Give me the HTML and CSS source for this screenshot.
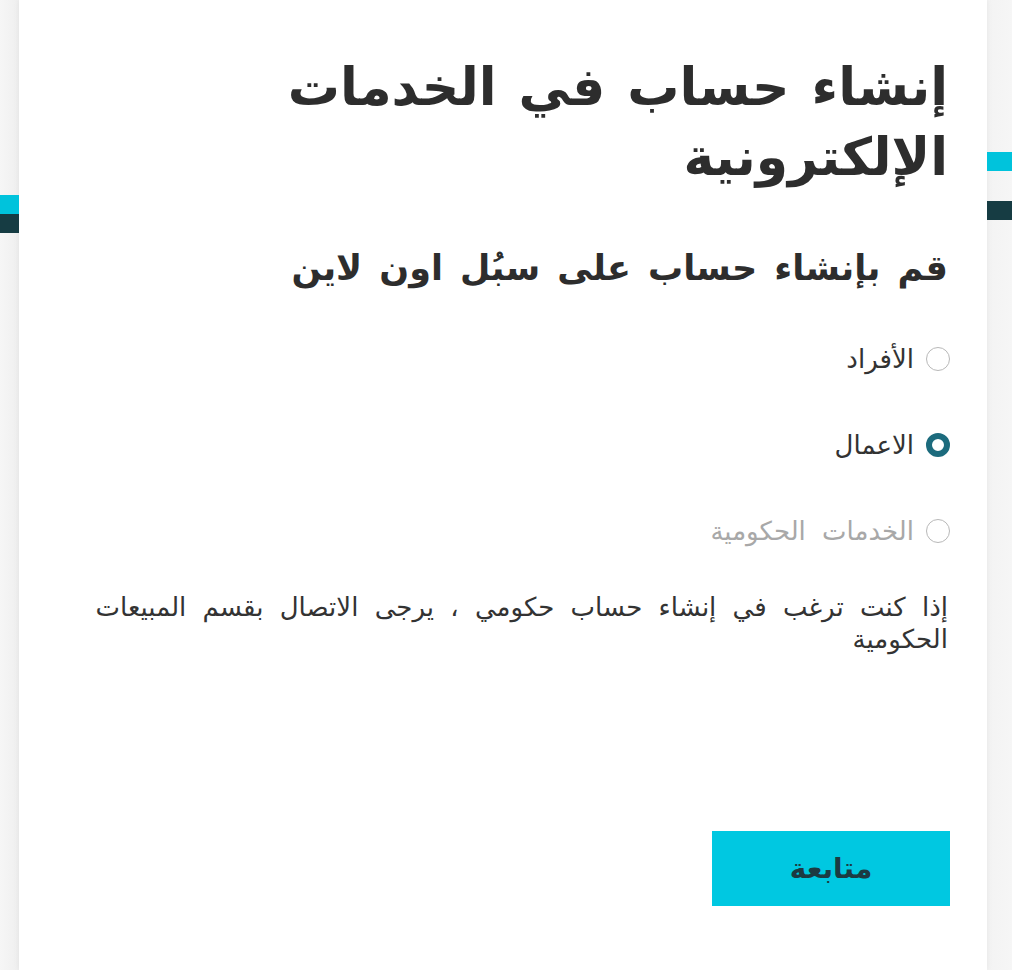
FILE: index.html
```html
<!DOCTYPE html>
<html lang="ar" dir="rtl">
<head>
<meta charset="utf-8">
<title>إنشاء حساب</title>
<link rel="stylesheet" href="styles.css">
</head>
<body>
<div class="deco deco-left"><span class="bar cyan"></span><span class="bar dark"></span></div>
<div class="deco deco-right"><span class="bar cyan"></span><span class="gap"></span><span class="bar dark"></span></div>
<main class="card">
  <h1 class="title">إنشاء حساب في الخدمات الإلكترونية</h1>
  <h2 class="subtitle">قم بإنشاء حساب على سبُل اون لاين</h2>
  <div class="options">
    <label class="option"><span class="radio"></span><span class="label">الأفراد</span></label>
    <label class="option"><span class="radio checked"></span><span class="label">الاعمال</span></label>
    <label class="option disabled"><span class="radio"></span><span class="label">الخدمات الحكومية</span></label>
  </div>
  <p class="note">إذا كنت ترغب في إنشاء حساب حكومي ، يرجى الاتصال بقسم المبيعات الحكومية</p>
  <div class="actions"><button class="btn">متابعة</button></div>
</main>
</body>
</html>
```
FILE: styles.css
```css
html, body {
  margin: 0;
  padding: 0;
  height: 100%;
}
body {
  background: linear-gradient(to right, #f6f6f6 0, #efefef 19px, #f3f3f3 987px, #f6f6f6 100%);
  font-family: "DejaVu Sans", "Noto Sans", sans-serif;
  color: #2e2e2e;
  overflow: hidden;
  direction: rtl;
}
.card {
  margin-right: 25px;
  width: 968px;
  min-height: 970px;
  box-sizing: border-box;
  background: #fff;
  padding: 52px 39px 0 60px;
  box-shadow: 0 0 6px rgba(0,0,0,0.06);
}
.deco {
  position: absolute;
  display: flex;
  flex-direction: column;
}
.deco-left { left: 0; top: 195px; width: 19px; }
.deco-right { right: 0; top: 152px; width: 25px; }
.bar { display: block; height: 19px; }
.gap { display: block; height: 30px; }
.cyan { background: #00c3dc; }
.dark { background: #163c43; }
.title {
  margin: 0;
  font-size: 52px;
  line-height: 70px;
  font-weight: bold;
  word-spacing: 4px;
  color: #2d2d2d;
  max-width: 700px;
}
.subtitle {
  margin: 54px 0 0;
  font-size: 35px;
  line-height: 44px;
  font-weight: bold;
  word-spacing: 5px;
  color: #2d2d2d;
}
.options {
  margin-top: 53px;
  display: flex;
  flex-direction: column;
  gap: 54px;
}
.option {
  display: flex;
  align-items: center;
  gap: 12px;
  height: 32px;
  margin-right: -2px;
  font-size: 26px;
  word-spacing: 8px;
  color: #333;
}
.option.disabled { color: #a8a8a8; }
.radio {
  width: 24px;
  height: 24px;
  box-sizing: border-box;
  border-radius: 50%;
  border: 1px solid #b8b8b8;
  background: #fff;
  flex: none;
}
.radio.checked {
  border: 6px solid #1c6b7d;
}
.note {
  margin: 44px 0 0;
  font-size: 26px;
  line-height: 32px;
  word-spacing: 8px;
  color: #333;
}
.actions {
  margin-top: 176px;
  margin-right: -2px;
  display: flex;
}
.btn {
  width: 238px;
  height: 75px;
  border: none;
  background: #00c8e1;
  color: #1c3a42;
  font-family: inherit;
  font-size: 28px;
  font-weight: bold;
}
```
